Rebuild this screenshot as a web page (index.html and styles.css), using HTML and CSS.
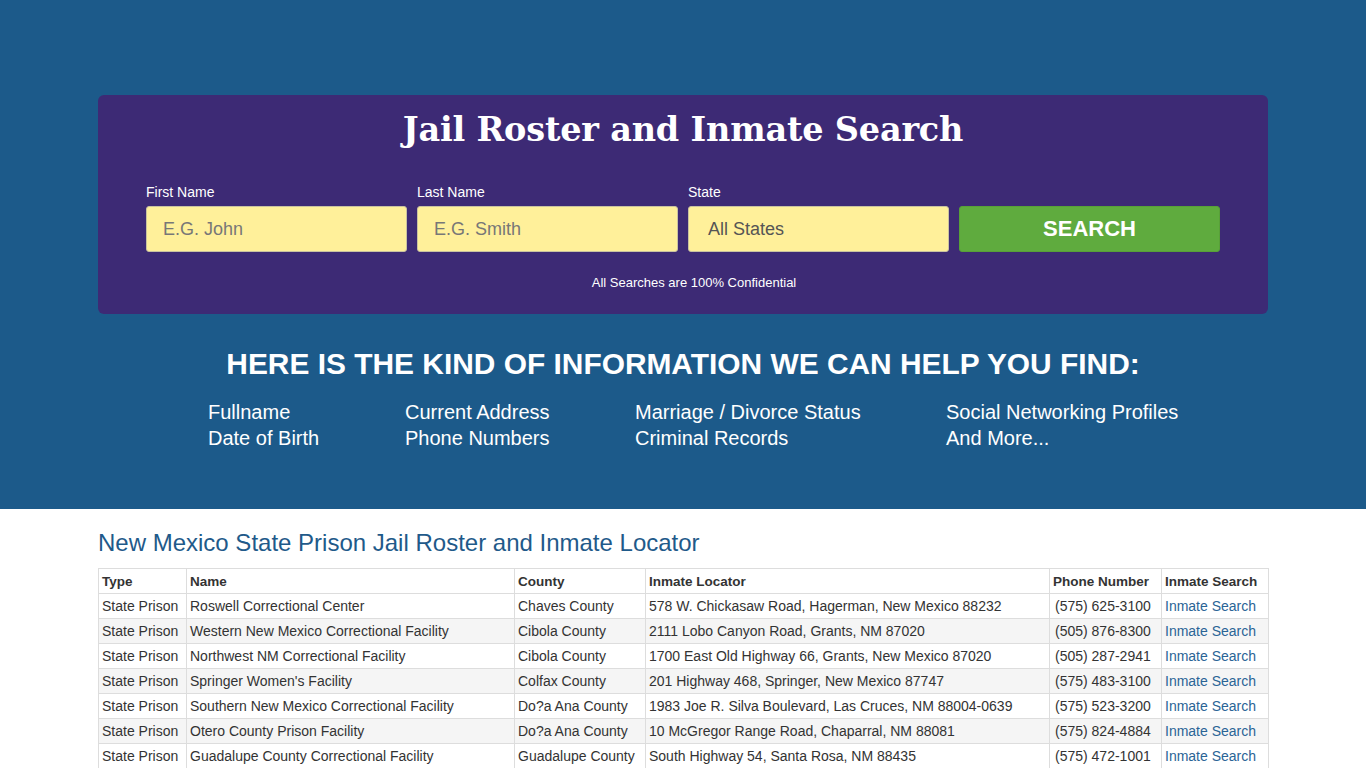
FILE: index.html
```html
<!DOCTYPE html>
<html>
<head>
<meta charset="utf-8">
<title>Jail Roster and Inmate Search</title>
<link rel="stylesheet" href="styles.css">
</head>
<body>
<section class="hero">
  <div class="card">
    <h1 class="title">Jail Roster and Inmate Search</h1>
    <form class="search">
      <div class="field">
        <label>First Name</label>
        <input type="text" placeholder="E.G. John">
      </div>
      <div class="field">
        <label>Last Name</label>
        <input type="text" placeholder="E.G. Smith">
      </div>
      <div class="field">
        <label>State</label>
        <div class="select">All States</div>
      </div>
      <div class="field">
        <label>&nbsp;</label>
        <button type="button" class="btn">SEARCH</button>
      </div>
    </form>
    <p class="confidential">All Searches are 100% Confidential</p>
  </div>
  <h2 class="info-title">HERE IS THE KIND OF INFORMATION WE CAN HELP YOU FIND:</h2>
  <div class="info">
    <ul class="col c1"><li>Fullname</li><li>Date of Birth</li></ul>
    <ul class="col c2"><li>Current Address</li><li>Phone Numbers</li></ul>
    <ul class="col c3"><li>Marriage / Divorce Status</li><li>Criminal Records</li></ul>
    <ul class="col c4"><li>Social Networking Profiles</li><li>And More...</li></ul>
  </div>
</section>
<section class="content">
  <h3 class="sub">New Mexico State Prison Jail Roster and Inmate Locator</h3>
  <table class="roster">
    <thead>
      <tr><th class="w1">Type</th><th class="w2">Name</th><th class="w3">County</th><th class="w4">Inmate Locator</th><th class="w5">Phone Number</th><th class="w6">Inmate Search</th></tr>
    </thead>
    <tbody>
      <tr><td>State Prison</td><td>Roswell Correctional Center</td><td>Chaves County</td><td>578 W. Chickasaw Road, Hagerman, New Mexico 88232</td><td>(575) 625-3100</td><td><a href="#">Inmate Search</a></td></tr>
      <tr><td>State Prison</td><td>Western New Mexico Correctional Facility</td><td>Cibola County</td><td>2111 Lobo Canyon Road, Grants, NM 87020</td><td>(505) 876-8300</td><td><a href="#">Inmate Search</a></td></tr>
      <tr><td>State Prison</td><td>Northwest NM Correctional Facility</td><td>Cibola County</td><td>1700 East Old Highway 66, Grants, New Mexico 87020</td><td>(505) 287-2941</td><td><a href="#">Inmate Search</a></td></tr>
      <tr><td>State Prison</td><td>Springer Women's Facility</td><td>Colfax County</td><td>201 Highway 468, Springer, New Mexico 87747</td><td>(575) 483-3100</td><td><a href="#">Inmate Search</a></td></tr>
      <tr><td>State Prison</td><td>Southern New Mexico Correctional Facility</td><td>Do?a Ana County</td><td>1983 Joe R. Silva Boulevard, Las Cruces, NM 88004-0639</td><td>(575) 523-3200</td><td><a href="#">Inmate Search</a></td></tr>
      <tr><td>State Prison</td><td>Otero County Prison Facility</td><td>Do?a Ana County</td><td>10 McGregor Range Road, Chaparral, NM 88081</td><td>(575) 824-4884</td><td><a href="#">Inmate Search</a></td></tr>
      <tr><td>State Prison</td><td>Guadalupe County Correctional Facility</td><td>Guadalupe County</td><td>South Highway 54, Santa Rosa, NM 88435</td><td>(575) 472-1001</td><td><a href="#">Inmate Search</a></td></tr>
    </tbody>
  </table>
</section>
</body>
</html>
```

FILE: styles.css
```css
* { box-sizing: border-box; }
html, body { margin: 0; padding: 0; }
body {
  font-family: "Liberation Sans", Arial, sans-serif;
  background: #fff;
  color: #333;
}
.hero {
  background: #1c5a8a;
  padding: 95px 0 0;
  height: 509px;
}
.card {
  width: 1170px;
  margin: 0 auto;
  background: #3d2a75;
  border-radius: 6px;
  padding: 13px 48px 24px;
  height: 219px;
}
.title {
  margin: 0;
  text-align: center;
  color: #fff;
  font-family: "DejaVu Serif", Georgia, serif;
  font-weight: bold;
  font-size: 33.5px;
  line-height: 44px;
  letter-spacing: -0.2px;
}
.search {
  display: grid;
  grid-template-columns: repeat(4, 261px);
  column-gap: 10px;
  margin-top: 32px;
}
.field label {
  display: block;
  color: #fff;
  font-size: 14px;
  line-height: 16px;
  margin-bottom: 6px;
}
.field input, .select {
  display: block;
  width: 100%;
  height: 46px;
  background: #fff09a;
  border: 1px solid #c9c2a0;
  border-radius: 3px;
  font-family: "Liberation Sans", Arial, sans-serif;
  font-size: 18px;
  padding: 0 16px;
  color: #555;
  outline: none;
}
.field input::placeholder { color: #777; }
.select {
  line-height: 44px;
  padding: 0 19px;
  color: #555;
}
.btn {
  display: block;
  width: 100%;
  height: 46px;
  background: #5fab3e;
  border: 1px solid #58a038;
  border-radius: 3px;
  color: #fff;
  font-family: "Liberation Sans", Arial, sans-serif;
  font-weight: bold;
  font-size: 22px;
}
.confidential {
  margin: 23px 0 0;
  padding-left: 22px;
  text-align: center;
  color: #fff;
  font-size: 13px;
  line-height: 16px;
}
.info-title {
  margin: 33px 0 0;
  text-align: center;
  color: #fff;
  font-size: 29.9px;
  line-height: 34px;
  font-weight: bold;
}
.info {
  width: 1170px;
  margin: 18px auto 0;
  padding-left: 110px;
  display: flex;
}
.col {
  list-style: none;
  margin: 0;
  padding: 0;
  color: #fff;
  font-size: 20px;
  line-height: 26px;
}
.c1 { width: 197px; }
.c2 { width: 230px; }
.c3 { width: 311px; }
.content {
  width: 1170px;
  margin: 0 auto;
  padding-top: 18px;
}
.sub {
  margin: 0 0 9px;
  font-weight: normal;
  font-size: 24px;
  line-height: 32px;
  color: #1f5a8a;
}
.roster {
  width: 1170px;
  border-collapse: collapse;
  font-size: 14px;
  table-layout: fixed;
}
.roster th, .roster td {
  border: 1px solid #ddd;
  padding: 0 3px;
  height: 25px;
  text-align: left;
  white-space: nowrap;
  overflow: hidden;
}
.roster th { font-weight: bold; font-size: 13.5px; color: #333; vertical-align: middle; padding-top: 1px; }
.roster td { color: #333; padding-left: 3px; }
.roster td:nth-child(5) { padding-left: 5px; }
.roster tbody tr:nth-child(odd) { background: #fff; }
.roster tbody tr:nth-child(even) { background: #f5f5f5; }
.roster a { color: #2a6496; text-decoration: none; }
.w1 { width: 88px; }
.w2 { width: 328px; }
.w3 { width: 131px; }
.w4 { width: 404px; }
.w5 { width: 112px; }
.w6 { width: 107px; }
```
